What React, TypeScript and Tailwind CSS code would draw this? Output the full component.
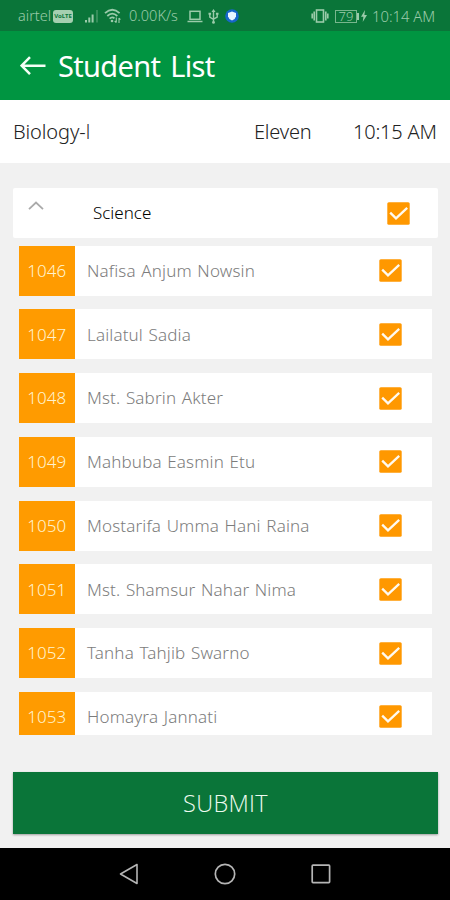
import React, { useState } from 'react';

interface Student {
  roll: number;
  name: string;
}

const STUDENTS: Student[] = [
  { roll: 1046, name: 'Nafisa Anjum Nowsin' },
  { roll: 1047, name: 'Lailatul Sadia' },
  { roll: 1048, name: 'Mst. Sabrin Akter' },
  { roll: 1049, name: 'Mahbuba Easmin Etu' },
  { roll: 1050, name: 'Mostarifa Umma Hani Raina' },
  { roll: 1051, name: 'Mst. Shamsur Nahar Nima' },
  { roll: 1052, name: 'Tanha Tahjib Swarno' },
  { roll: 1053, name: 'Homayra Jannati' },
];

const Checkbox: React.FC<{ checked: boolean; onChange: () => void }> = ({ checked, onChange }) => (
  <button onClick={onChange} className="block h-[23px] w-[23px] shrink-0">
    <svg viewBox="0 0 23 23" className="block h-full w-full">
      <rect x="0.3" y="0.3" width="22.4" height="22.4" rx="1.5" fill="#ff9800" />
      {checked && <path d="M3.2 10.6 9 16.4 20.2 5.8" fill="none" stroke="#fffaf0" strokeWidth="2.3" />}
    </svg>
  </button>
);

const StatusBar: React.FC = () => (
  <div className="flex h-[31px] shrink-0 items-center bg-[#0a7539] pl-[18px] pr-[15px] pt-px text-[14.5px] font-light text-[#9bcbaa]">
    <span className="w-[35px] whitespace-nowrap">airtel</span>
    <span className="flex h-[13px] w-[20px] items-center justify-center rounded-[3px] bg-[#a5cfb0] text-[6px] font-bold leading-none text-[#0a7539]">VoLTE</span>
    <svg className="ml-[11px] h-[14px] w-[16px]" viewBox="0 0 16 14" fill="#9bcbaa">
      <rect x="1" y="11" width="2" height="2.5" />
      <rect x="4.3" y="8.5" width="2" height="5" />
      <rect x="7.6" y="5.5" width="2" height="8" />
      <rect x="12" y="1" width="2" height="12.5" opacity="0.3" />
    </svg>
    <svg className="ml-[4px] h-[16px] w-[17px]" viewBox="0 0 17 16" fill="none" stroke="#9bcbaa" strokeWidth="1.8">
      <path d="M1 5.2Q8.3-1.6 15.6 5.2" />
      <path d="M3.3 8Q8.3 3.3 13.3 8" />
      <path d="M5.6 10.6Q8.3 8.2 10.4 10.4" />
      <circle cx="8" cy="13" r="1.3" fill="#9bcbaa" stroke="none" />
      <path d="M12.3 9.5v5M10.7 13l1.6 1.7M15 15v-5M15 10l1.4 1.6" strokeWidth="1.1" />
    </svg>
    <span className="ml-[8px] w-[51px] whitespace-nowrap">0.00K/s</span>
    <svg className="ml-[7px] h-[13px] w-[16px]" viewBox="0 0 16 13" fill="none" stroke="#9bcbaa" strokeWidth="1.5">
      <rect x="3" y="1.3" width="10" height="8" />
      <path d="M0.5 11.5h15" />
    </svg>
    <svg className="ml-[5px] h-[15px] w-[11px]" viewBox="0 0 11 15" fill="none" stroke="#9bcbaa" strokeWidth="1.4">
      <path d="M5.5 14V2M1.8 5v3.2l3.7 2.3M9.2 5v3l-3.7 2.1" />
      <path d="M3.5 3 5.5 0l2 3z" fill="#9bcbaa" stroke="none" />
      <circle cx="5.5" cy="13.4" r="1.4" fill="#9bcbaa" stroke="none" />
      <path d="M0.5 4.7h2.6M7.9 4.7h2.6" strokeWidth="2" />
    </svg>
    <svg className="ml-[6px] h-[14px] w-[14px]" viewBox="0 0 14 14">
      <circle cx="7" cy="7" r="6.8" fill="#1766c8" />
      <path d="M7 2.6 11 4v3.2Q10.5 10 7 11.6 3.5 10 3 7.2V4z" fill="#e8f6ff" />
    </svg>

    <svg className="ml-auto h-[14px] w-[18px]" viewBox="0 0 18 14" fill="none" stroke="#9bcbaa" strokeWidth="1.6">
      <rect x="5.5" y="1" width="7" height="12" />
      <path d="M3.2 2.5v9M14.8 2.5v9M1.2 4.5v5M16.8 4.5v5" />
    </svg>
    <div className="ml-[6px] flex h-[13px] w-[22px] items-center justify-center border border-[#78b68d] text-[13px] leading-none">79</div>
    <div className="h-[7px] w-[2px] bg-[#9bcbaa]" />
    <svg className="ml-[2px] h-[12px] w-[6px]" viewBox="0 0 6 12" fill="#9bcbaa">
      <path d="M4 0 0 6.7h2.4L1.7 12 6 5H3.4z" />
    </svg>
    <span className="ml-[5px] w-[63px] whitespace-nowrap text-[14.8px]">10:14 AM</span>
  </div>
);

const App: React.FC = () => {
  const [present, setPresent] = useState<number[]>(STUDENTS.map(s => s.roll));
  const [expanded, setExpanded] = useState(true);

  const toggle = (roll: number) => {
    setPresent(prev => (prev.includes(roll) ? prev.filter(r => r !== roll) : [...prev, roll]));
  };

  const allPresent = present.length === STUDENTS.length;

  return (
    <div className="flex h-[900px] w-[450px] flex-col overflow-hidden bg-[#f1f1f1] font-['Noto_Sans','Open_Sans',sans-serif]">
      <StatusBar />

      {/* App bar */}
      <header className="flex h-[69px] shrink-0 items-center bg-[#009541] pl-[20px] text-white">
        <svg className="h-[20px] w-[26px]" viewBox="0 0 26 20" fill="none" stroke="#f4fff6" strokeWidth="2.5">
          <path d="M25.5 9.7H2M10 1.2 1.6 9.7l8.4 8.5" />
        </svg>
        <h1 className="ml-[12px] whitespace-nowrap pt-px text-[29px] font-normal tracking-[-0.65px] [word-spacing:3px]">Student List</h1>
      </header>

      {/* Class info */}
      <section className="flex h-[63px] shrink-0 items-center bg-white pl-[13px] pr-[13px] text-[20px] font-light text-[#222]">
        <span className="whitespace-nowrap tracking-[-0.1px]">Biology-<span className="font-['Open_Sans']">I</span></span>
        <span className="ml-auto w-[99px] whitespace-nowrap tracking-[-0.2px]">Eleven</span>
        <span className="w-[84px] whitespace-nowrap tracking-[-0.2px]">10:15 AM</span>
      </section>

      <main className="ml-[13px] mr-[12px] mt-[25px] flex h-[547px] shrink-0 flex-col overflow-hidden">
        <div className="flex h-[50px] shrink-0 items-center rounded-xs bg-white pr-[28.5px]">
          <button onClick={() => setExpanded(!expanded)} className="ml-[15px] mb-[16px]">
            <svg className="h-[9px] w-[16px]" viewBox="0 0 16 9" fill="none" stroke="#aaa" strokeWidth="1.8">
              <path d="M1 8.2 8 1.5l7 6.7" />
            </svg>
          </button>
          <span className="ml-[49px] flex-1 whitespace-nowrap text-[17px] font-[350] text-black">Science</span>
          <Checkbox checked={allPresent} onChange={() => setPresent(allPresent ? [] : STUDENTS.map(s => s.roll))} />
        </div>

        {expanded && (
          <ul className="mx-[6px] mt-[7.5px] flex flex-col gap-[13.75px]">
            {STUDENTS.map(student => (
              <li key={student.roll} className="flex h-[50px] shrink-0 items-center bg-white pr-[30px] text-[17px] font-light">
                <span className="flex h-full w-[55.5px] items-center justify-center bg-[#ff9b00] text-[#fff3cf]">{student.roll}</span>
                <span className="ml-[12.5px] flex-1 whitespace-nowrap tracking-[0.15px] text-[#7c7c7c] [word-spacing:1px]">{student.name}</span>
                <Checkbox checked={present.includes(student.roll)} onChange={() => toggle(student.roll)} />
              </li>
            ))}
          </ul>
        )}
      </main>

      <button className="ml-[13px] mr-[12px] mt-[37px] flex h-[62px] shrink-0 items-center justify-center bg-[#0a7539] pt-[2px] font-['Open_Sans'] text-[23.5px] font-light tracking-[0.3px] text-[#eefbf0] shadow-[0_1px_2px_rgba(0,0,0,0.35)]">
        SUBMIT
      </button>

      {/* System navigation */}
      <nav className="mt-auto flex h-[52.5px] shrink-0 items-center justify-between bg-black pl-[119px] pr-[119px]">
        <svg className="h-[22px] w-[20px]" viewBox="0 0 20 22" fill="none" stroke="#b5b5b5" strokeWidth="1.6" strokeLinejoin="round">
          <path d="M18 1.5v19L1.5 11z" />
        </svg>
        <svg className="h-[22px] w-[22px]" viewBox="0 0 22 22" fill="none" stroke="#b5b5b5" strokeWidth="1.7">
          <circle cx="11" cy="11" r="9.7" />
        </svg>
        <svg className="h-[20px] w-[20px]" viewBox="0 0 20 20" fill="none" stroke="#b5b5b5" strokeWidth="1.7">
          <rect x="1.2" y="1.2" width="17.4" height="17.4" rx="0.8" />
        </svg>
      </nav>
    </div>
  );
};

export default App;
